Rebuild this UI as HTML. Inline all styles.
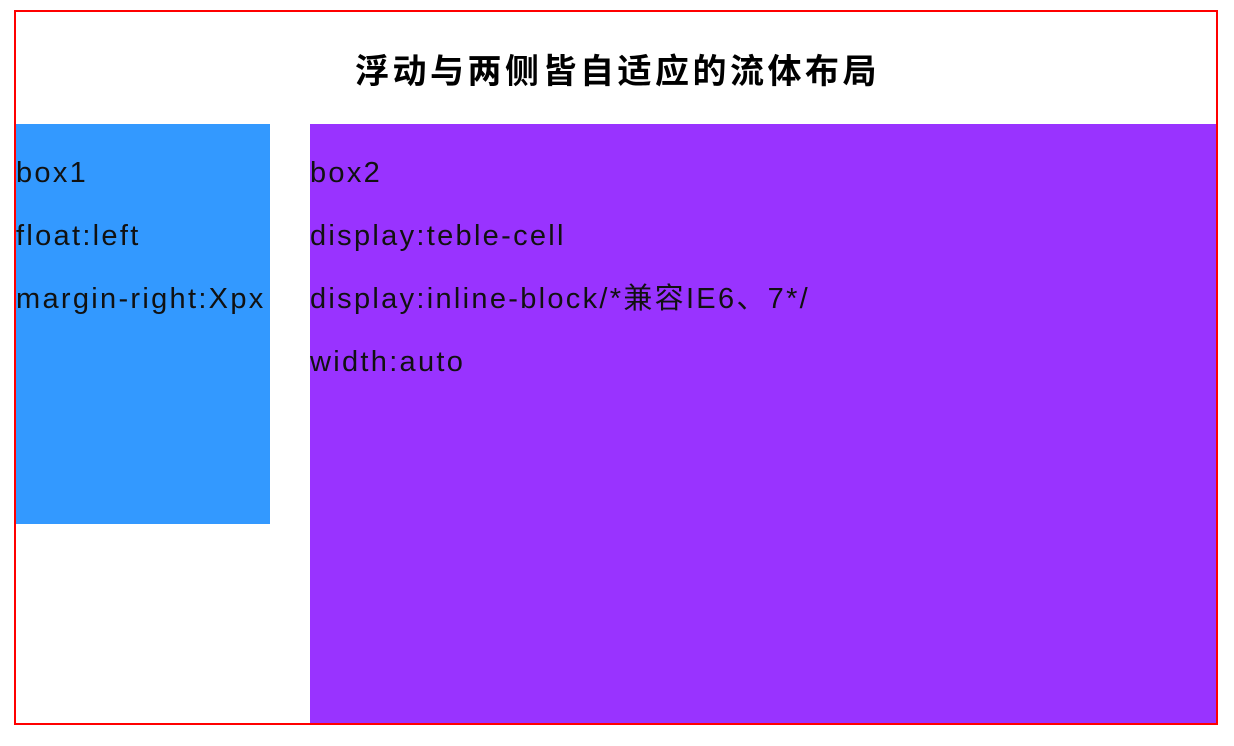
<!DOCTYPE html>
<html><head><meta charset="utf-8"><style>
body{margin:0;background:#fff;font-family:"Liberation Sans","Noto Sans CJK SC",sans-serif;}
.wrap{position:absolute;left:14px;top:10px;width:1200px;height:711px;border:2px solid #f00;}
h1{position:absolute;left:0;right:0;top:35px;margin:0;text-align:center;font-size:34px;font-weight:bold;letter-spacing:3.5px;line-height:50px;color:#000;text-indent:3px}
.b1{position:absolute;left:0;top:112px;width:254px;height:400px;background:#3399ff;}
.b2{position:absolute;left:294px;top:112px;width:906px;height:599px;background:#9933ff;}
p{margin:0;font-size:29px;line-height:63px;color:#111;white-space:nowrap;letter-spacing:2.3px}
.in{padding-top:18px}
</style></head><body>
<div class="wrap">
<h1>浮动与两侧皆自适应的流体布局</h1>
<div class="b1"><div class="in"><p>box1</p><p>float:left</p><p>margin-right:Xpx</p></div></div>
<div class="b2"><div class="in"><p>box2</p><p>display:teble-cell</p><p>display:inline-block/*兼容IE6、7*/</p><p>width:auto</p></div></div>
</div>
</body></html>
